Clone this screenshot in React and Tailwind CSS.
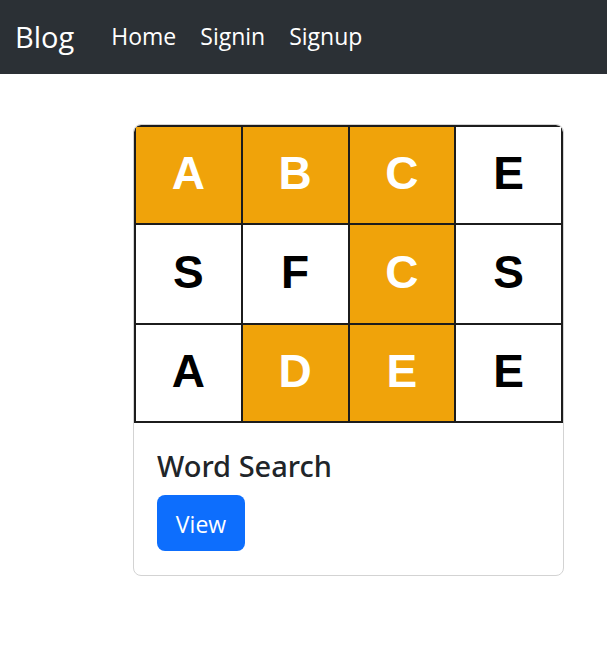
import React from "react";

const cells = [
  ["A", true], ["B", true], ["C", true], ["E", false],
  ["S", false], ["F", false], ["C", true], ["S", false],
  ["A", false], ["D", true], ["E", true], ["E", false],
];

export default function App() {
  return (
    <div className="min-h-[660px] bg-white" style={{ fontFamily: '"Open Sans", "Noto Sans", sans-serif' }}>
      <nav className="h-[74px] bg-[#2b3035] flex items-center pl-[15px] pb-[2px]">
        <span className="text-[29px] text-white mr-[37px] leading-none">Blog</span>
        <div className="flex items-center gap-[24px] text-[23px] text-white leading-none">
          <span>Home</span>
          <span>Signin</span>
          <span>Signup</span>
        </div>
      </nav>
      <div className="pt-[50px] pl-[133px]">
        <div className="w-[431px] border border-[#d3d3d3] rounded-[8px] overflow-hidden">
          <div className="grid grid-cols-4 grid-rows-[96px_98px_96px] gap-[2px] bg-[#1c1c1c] border-2 border-[#1c1c1c] rounded-t-[7px]">
            {cells.map(([l, on], i) => (
              <div
                key={i}
                className={
                  "flex items-center justify-center text-[46px] font-bold leading-none pb-[4px] " +
                  (on ? "bg-[#f0a30a] text-white" : "bg-white text-black")
                }
                style={{ fontFamily: '"Liberation Sans", Arial, sans-serif' }}
              >
                {l}
              </div>
            ))}
          </div>
          <div className="pt-[27px] pb-[24px] px-[23px]">
            <h5
              className="text-[29px] font-medium text-[#212529] leading-[32px] mb-[13px]"
              style={{ fontFamily: '"Noto Sans", "Open Sans", sans-serif' }}
            >
              Word Search
            </h5>
            <button className="w-[88px] h-[56px] rounded-[8px] bg-[#0d6efd] text-white text-[23px] flex items-center justify-center pt-[2px]">
              View
            </button>
          </div>
        </div>
      </div>
    </div>
  );
}
